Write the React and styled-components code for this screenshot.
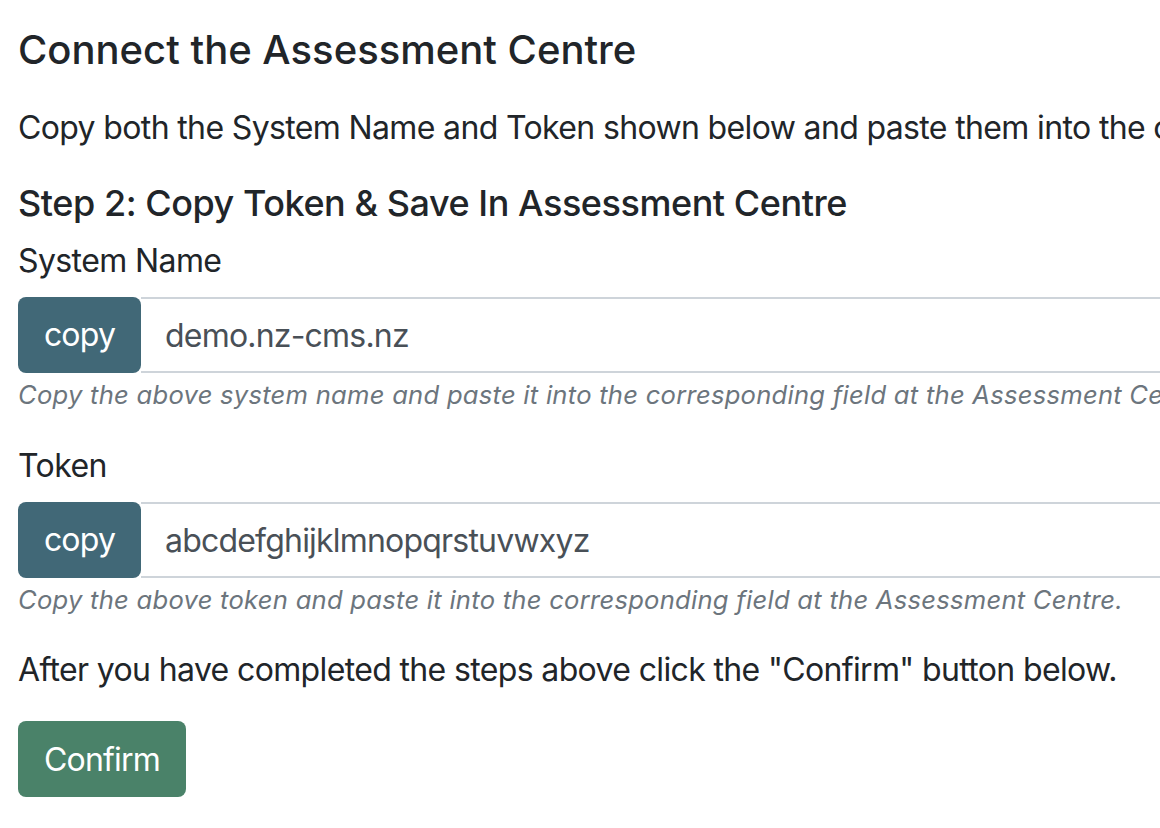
import React from "react";
import styled, { createGlobalStyle } from "styled-components";

const GlobalStyle = createGlobalStyle`
  body {
    margin: 0;
    background: #fff;
    color: #212529;
    font-family: Inter, "Liberation Sans", Arial, sans-serif;
  }
`;

const Page = styled.div`
  width: 1160px;
  height: 828px;
  overflow: hidden;
  box-sizing: border-box;
  padding: 26px 0 0 18px;
`;

const Title = styled.h3`
  margin: 0 0 30px;
  font-size: 40px;
  font-weight: 500;
  line-height: 48px;
  white-space: nowrap;
`;

const Text = styled.p`
  margin: 0 0 ${(p) => p.$gap || 30}px;
  font-size: 32px;
  line-height: 48px;
  letter-spacing: -0.64px;
  white-space: nowrap;
`;

const StepTitle = styled.h4`
  margin: 0 0 12px;
  font-size: 36px;
  font-weight: 500;
  line-height: 43px;
  letter-spacing: -0.45px;
  white-space: nowrap;
`;

const Field = styled.div`
  margin-bottom: ${(p) => p.$gap || 28}px;
`;

const Label = styled.label`
  display: block;
  margin-bottom: 12px;
  font-size: 32px;
  line-height: 48px;
  letter-spacing: -0.6px;
`;

const InputGroup = styled.div`
  display: flex;
  width: 1400px;
  height: 76px;
`;

const CopyButton = styled.button`
  flex: none;
  width: 123px;
  height: 76px;
  border: none;
  border-radius: 8px;
  background: #416877;
  color: #fff;
  font-family: inherit;
  font-size: 32px;
  line-height: 48px;
  letter-spacing: -0.8px;
  padding: 0;
  cursor: pointer;
`;

const ValueInput = styled.input`
  flex: 1;
  min-width: 0;
  box-sizing: border-box;
  height: 76px;
  margin: 0;
  padding: 0 24px;
  border: 2px solid #ced4da;
  border-left: none;
  background: #fff;
  color: #495057;
  font-family: inherit;
  font-size: 32px;
  letter-spacing: -0.8px;
  outline: none;
`;

const Help = styled.small`
  display: block;
  margin-top: 3px;
  font-size: 25.6px;
  line-height: 38px;
  letter-spacing: 0.25px;
  font-style: italic;
  color: #6c757d;
  white-space: nowrap;
`;

const ConfirmButton = styled.button`
  width: 168px;
  height: 76px;
  border: none;
  border-radius: 8px;
  background: #4a8269;
  color: #fff;
  font-family: inherit;
  font-size: 32px;
  letter-spacing: -0.8px;
  padding: 0;
  cursor: pointer;
`;

const fields = [
  {
    label: "System Name",
    value: "demo.nz-cms.nz",
    help: "Copy the above system name and paste it into the corresponding field at the Assessment Centre.",
  },
  {
    label: "Token",
    value: "abcdefghijklmnopqrstuvwxyz",
    help: "Copy the above token and paste it into the corresponding field at the Assessment Centre.",
  },
];

export default function App() {
  return (
    <Page>
      <GlobalStyle />
      <Title>Connect the Assessment Centre</Title>
      <Text>
        Copy both the System Name and Token shown below and paste them into the corresponding fields at the Assessment Centre.
      </Text>
      <StepTitle>Step 2: Copy Token &amp; Save In Assessment Centre</StepTitle>
      {fields.map((f, i) => (
        <Field key={f.label} $gap={i === 0 ? 28 : 27}>
          <Label>{f.label}</Label>
          <InputGroup>
            <CopyButton type="button">copy</CopyButton>
            <ValueInput readOnly value={f.value} />
          </InputGroup>
          <Help>{f.help}</Help>
        </Field>
      ))}
      <Text $gap={27}>After you have completed the steps above click the "Confirm" button below.</Text>
      <ConfirmButton type="button">Confirm</ConfirmButton>
    </Page>
  );
}
